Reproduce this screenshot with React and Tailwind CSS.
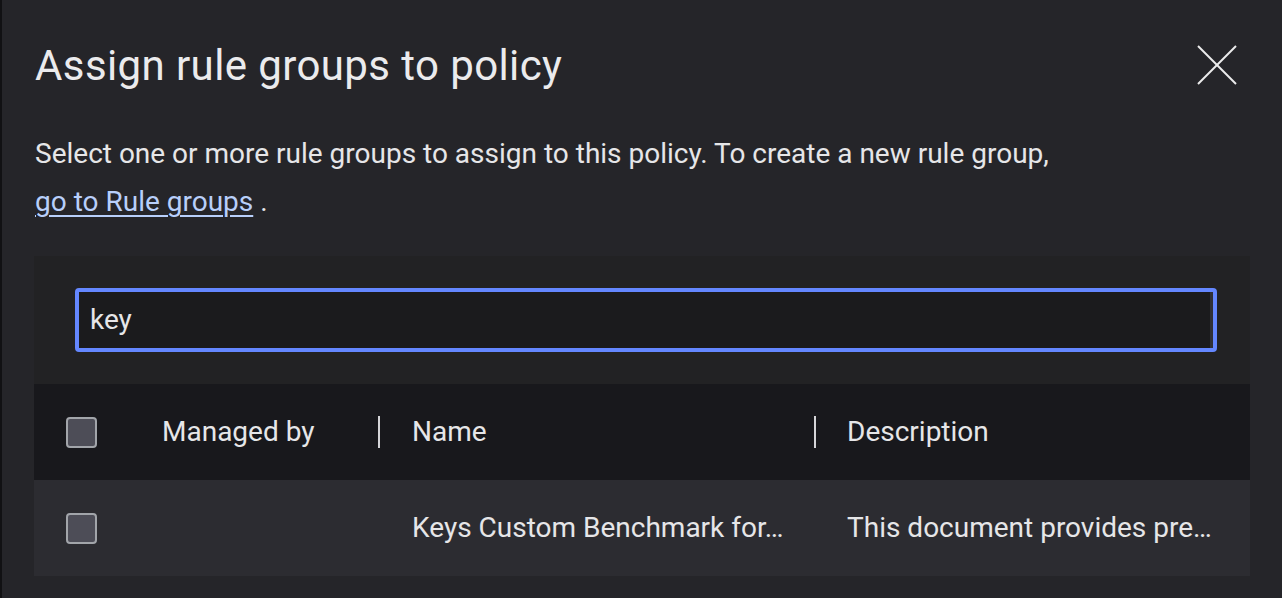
import React from 'react';

const Checkbox = () => (
  <div className="w-[31px] h-[31px] rounded-[4px] border-2 border-[#a2a5aa] bg-[#4d4d57]"></div>
);

export default function App() {
  return (
    <div
      className="w-full h-[598px] overflow-hidden bg-[#252529] border-l-2 border-[#111113] text-[#e6e6e8]"
      style={{ fontFamily: 'Roboto, "Liberation Sans", sans-serif' }}
    >
      <div className="flex items-start justify-between pl-[33px] pr-[44px] pt-[40px]">
        <h1 className="text-[42px] leading-[52px] tracking-[0.4px] text-[#ebebed]">Assign rule groups to policy</h1>
        <button className="mt-[5px]">
          <svg width="42" height="40" viewBox="0 0 42 40" fill="none" stroke="#ececec" strokeWidth="2">
            <line x1="2" y1="1" x2="40" y2="39" />
            <line x1="40" y1="1" x2="2" y2="39" />
          </svg>
        </button>
      </div>

      <p className="pl-[33px] mt-[38px] text-[28px] leading-[48px]">
        Select one or more rule groups to assign to this policy. To create a new rule group,
        <br />
        <a href="#" className="text-[#b8cffa] underline underline-offset-4 decoration-2">go to Rule groups</a> .
      </p>

      <div className="ml-[32px] mr-[32px] mt-[30px]">
        <div className="bg-[#222224] pl-[41px] pr-[33px] py-[32px]">
          <div className="h-[64px] rounded-[4px] border-[4px] border-[#6487ff] bg-[#303036] p-0">
            <div className="h-full mr-[3px] mb-[3px] bg-[#1b1b1d] flex items-center pl-[11px] text-[28px]">key</div>
          </div>
        </div>

        <div className="grid grid-cols-[96px_248px_436px_1fr] h-[96px] bg-[#18181c] items-center text-[28px]">
          <div className="pl-[32px]"><Checkbox /></div>
          <div className="pl-[32px]">Managed by</div>
          <div className="flex items-center">
            <div className="w-[2px] h-[32px] bg-[#d5d5d8]"></div>
            <span className="pl-[32px]">Name</span>
          </div>
          <div className="flex items-center">
            <div className="w-[2px] h-[32px] bg-[#d5d5d8]"></div>
            <span className="pl-[31px]">Description</span>
          </div>
        </div>

        <div className="grid grid-cols-[96px_248px_436px_1fr] h-[96px] bg-[#2c2c31] items-center text-[28px]">
          <div className="pl-[32px]"><Checkbox /></div>
          <div></div>
          <div className="pl-[34px] whitespace-nowrap">Keys Custom Benchmark for…</div>
          <div className="pl-[33px] whitespace-nowrap">This document provides pre…</div>
        </div>
      </div>
    </div>
  );
}
